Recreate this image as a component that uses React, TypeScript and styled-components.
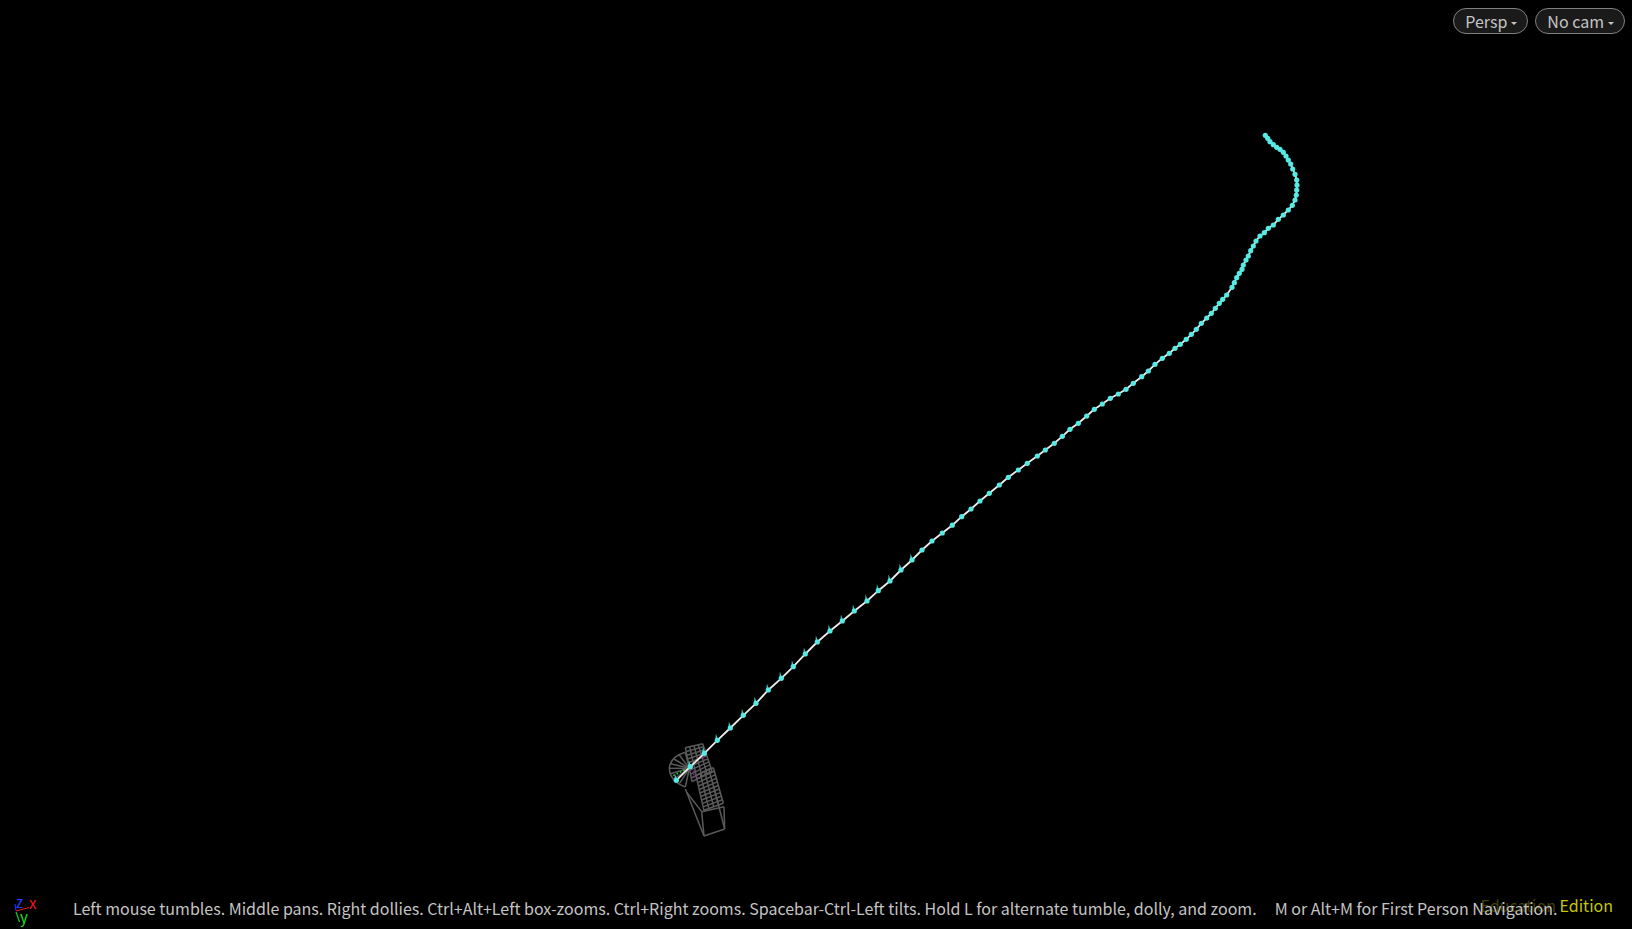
import { createGlobalStyle, styled } from "styled-components";

const GlobalStyle = createGlobalStyle`
  html, body {
    margin: 0;
    height: 100%;
    background: #000;
    overflow: hidden;
  }
`;

type Pt = [number, number];

// Traced from the far end of the path down to the camera rig.
const pathDots: Pt[] = [
  [1265.3, 135.3], [1267.7, 138.3], [1270, 141.7], [1273.3, 144.7], [1276.7, 147.3], [1280, 149.3],
  [1283.3, 152.3], [1286, 156], [1288.3, 160], [1290.7, 164], [1292.7, 169], [1295, 174.3],
  [1296.7, 180], [1297, 185], [1296.7, 190], [1296.3, 195], [1295, 200], [1292.3, 205.3],
  [1288.3, 210], [1283.3, 215], [1278.3, 219.3], [1273.3, 225], [1268.3, 228.3], [1264.3, 232.7],
  [1260, 236], [1256, 241], [1253.3, 246], [1250.7, 250.7], [1248.3, 256], [1246, 260],
  [1243.3, 265], [1242, 269.3], [1239.3, 273.3], [1236.7, 277.7], [1234.3, 282.7], [1232, 287.3],
  [1226.7, 295], [1222.7, 299.3], [1219.3, 303.3], [1215.3, 308.3], [1211.3, 313.3], [1206.7, 318],
  [1201.3, 323.3], [1196.3, 329.3], [1191.3, 334.3], [1186.3, 339.3], [1180.3, 344.3], [1175, 348.3],
  [1169.3, 353.3], [1162.3, 358.3], [1155, 364.3], [1148.3, 371], [1141.7, 376.7], [1133.3, 383.3],
  [1126, 389.3], [1118.3, 394], [1110.3, 398.3], [1102.3, 404], [1094.3, 409.3], [1086.7, 416],
  [1078.3, 423.3], [1070, 429.3], [1062.3, 436.3], [1054.3, 443.3], [1045.3, 450], [1037.3, 456],
  [1027.3, 463.3], [1018.3, 470], [1008.3, 477.3], [999.3, 485], [989.3, 493.3], [980, 501],
  [971, 509], [961.7, 516.7], [952.3, 525.2], [942.3, 533], [932, 541], [922, 550],
  [912, 560], [901, 570], [890, 581], [878.3, 590.7], [867, 601], [854.3, 611],
  [842.3, 621], [830, 631], [817.3, 642], [805.3, 654], [793.3, 666.7], [781.3, 678.3],
  [768.3, 690], [756, 703.3], [743.3, 715.3], [730.3, 728], [717.3, 740.3], [704.3, 753.3],
  [690.3, 766.7], [676.3, 780.3],
];

const tickedDots = pathDots.filter(([x]) => x < 915);

// Lines of a four-cornered cage, evenly split along both sides.
function cageLines(a: Pt, b: Pt, c: Pt, d: Pt, across: number, along: number) {
  const mix = (p: Pt, q: Pt, t: number): Pt => [p[0] + (q[0] - p[0]) * t, p[1] + (q[1] - p[1]) * t];
  const lines: [Pt, Pt][] = [];
  for (let i = 0; i <= along; i++) lines.push([mix(a, d, i / along), mix(b, c, i / along)]);
  for (let i = 0; i <= across; i++) lines.push([mix(a, b, i / across), mix(d, c, i / across)]);
  return lines;
}

const fanEdge: Pt[] = [
  [76, 52], [58, 60], [42, 72], [32, 86], [28, 100], [31, 116], [42, 132], [58, 146], [76, 156],
];

const rigLines: [Pt, Pt][] = [
  ...cageLines([76, 38], [128, 26], [156, 108], [96, 140], 4, 9),
  ...cageLines([108, 122], [160, 98], [190, 205], [132, 226], 4, 10),
  ...fanEdge.map((p): [Pt, Pt] => [p, [88, 100]]),
  [[125, 230], [192, 215]],
  [[192, 215], [194, 282]],
  [[194, 282], [132, 303]],
  [[132, 303], [125, 230]],
  [[76, 162], [132, 303]],
  [[80, 172], [125, 230]],
  [[160, 150], [194, 282]],
];

function Wireframe() {
  return (
    <Scene viewBox="0 0 1632 929">
      <g transform="translate(660 735) scale(0.3333)" stroke="#5a5a5a" strokeWidth={4.5} fill="none">
        {rigLines.map(([p, q], i) => (
          <line key={i} x1={p[0]} y1={p[1]} x2={q[0]} y2={q[1]} />
        ))}
        <path d="M76 52 Q30 66 28 100 Q30 140 76 156" />
        <path d="M40 122 L76 104" stroke="#2fd22f" strokeDasharray="5 6" />
        <path d="M100 108 L104 132 M130 66 L134 76" stroke="#a020a0" strokeDasharray="4 4" />
      </g>
      <polyline
        points={pathDots.map((p) => p.join(",")).join(" ")}
        fill="none"
        stroke="#ececec"
        strokeWidth={1.8}
      />
      {tickedDots.map(([x, y], i) => (
        <path key={i} d={`M${x - 2} ${y} L${x - 1.4} ${y - 6.5} L${x + 1} ${y} Z`} fill="#3fc9c4" />
      ))}
      {pathDots.map(([x, y], i) => (
        <circle key={i} cx={x} cy={y} r={2.6} fill="#55ebe4" />
      ))}
    </Scene>
  );
}

function AxisGizmo() {
  return (
    <Gizmo viewBox="0 0 32 32">
      <path d="M7 17 L6 10" stroke="#1f2ff0" strokeWidth={1.2} />
      <path d="M7 17 L20 13.5" stroke="#e01818" strokeWidth={1.2} />
      <path d="M7 18 L10.5 28" stroke="#10d020" strokeWidth={1.2} />
      <GizmoLabel x={7} y={14} fill="#2a3cff">z</GizmoLabel>
      <GizmoLabel x={20} y={15} fill="#f01818">x</GizmoLabel>
      <GizmoLabel x={11} y={29} fill="#14e024">y</GizmoLabel>
    </Gizmo>
  );
}

function ViewMenu({ label }: { label: string }) {
  return (
    <MenuButton>
      {label}
      <Caret />
    </MenuButton>
  );
}

export default function App() {
  return (
    <>
      <GlobalStyle />
      <Viewport>
        <Wireframe />
        <Toolbar>
          <ViewMenu label="Persp" />
          <ViewMenu label="No cam" />
        </Toolbar>
        <HintBar>
          <AxisGizmo />
          <Hint>
            Left mouse tumbles. Middle pans. Right dollies. Ctrl+Alt+Left box-zooms. Ctrl+Right zooms.
            Spacebar-Ctrl-Left tilts. Hold L for alternate tumble, dolly, and zoom.
          </Hint>
          <Hint>M or Alt+M for First Person Navigation.</Hint>
        </HintBar>
        <Edition>
          <span className="faded">Education </span>Edition
        </Edition>
      </Viewport>
    </>
  );
}

const Viewport = styled.div`
  position: relative;
  display: flex;
  flex-flow: column;
  justify-content: space-between;
  height: 929px;
  background: #000;
  overflow: hidden;
  font-family: "Noto Sans CJK JP", "Noto Sans", sans-serif;
`;

const Scene = styled.svg`
  position: absolute;
  inset: 0;
  width: 1632px;
  height: 929px;
`;

const Toolbar = styled.div`
  position: relative;
  display: flex;
  flex-flow: row;
  justify-content: flex-end;
  gap: 7px;
  padding: 8px 7px 0 0;
`;

const MenuButton = styled.div`
  display: flex;
  align-items: center;
  height: 24px;
  padding: 0 10px 0 11px;
  border: 1.5px solid #808080;
  border-radius: 14px;
  background: #1a1a1a;
  color: #c4c4c4;
  font-size: 16px;
  line-height: 24px;
`;

const Caret = styled.span`
  width: 0;
  height: 0;
  margin: 4px 0 0 4px;
  border-left: 3.5px solid transparent;
  border-right: 3.5px solid transparent;
  border-top: 3.5px solid #c4c4c4;
`;

const HintBar = styled.div`
  position: relative;
  z-index: 1;
  display: flex;
  flex-flow: row;
  align-items: center;
  height: 34px;
  padding: 0 0 4px 9px;
`;

const Gizmo = styled.svg`
  width: 32px;
  height: 32px;
  margin: 4px 32px 0 0;
  flex-shrink: 0;
  overflow: visible;
`;

const GizmoLabel = styled.text`
  font-family: "Noto Sans CJK JP", "Noto Sans", sans-serif;
  font-size: 15px;
`;

const Hint = styled.div`
  margin-right: 18px;
  color: #c4c4c4;
  font-size: 16px;
  line-height: 30px;
  white-space: nowrap;
`;

const Edition = styled.div`
  position: absolute;
  right: 19px;
  bottom: 12px;
  color: #c6c600;
  font-size: 16px;
  line-height: 24px;
  white-space: nowrap;

  > .faded {
    color: #3f3f00;
  }
`;
